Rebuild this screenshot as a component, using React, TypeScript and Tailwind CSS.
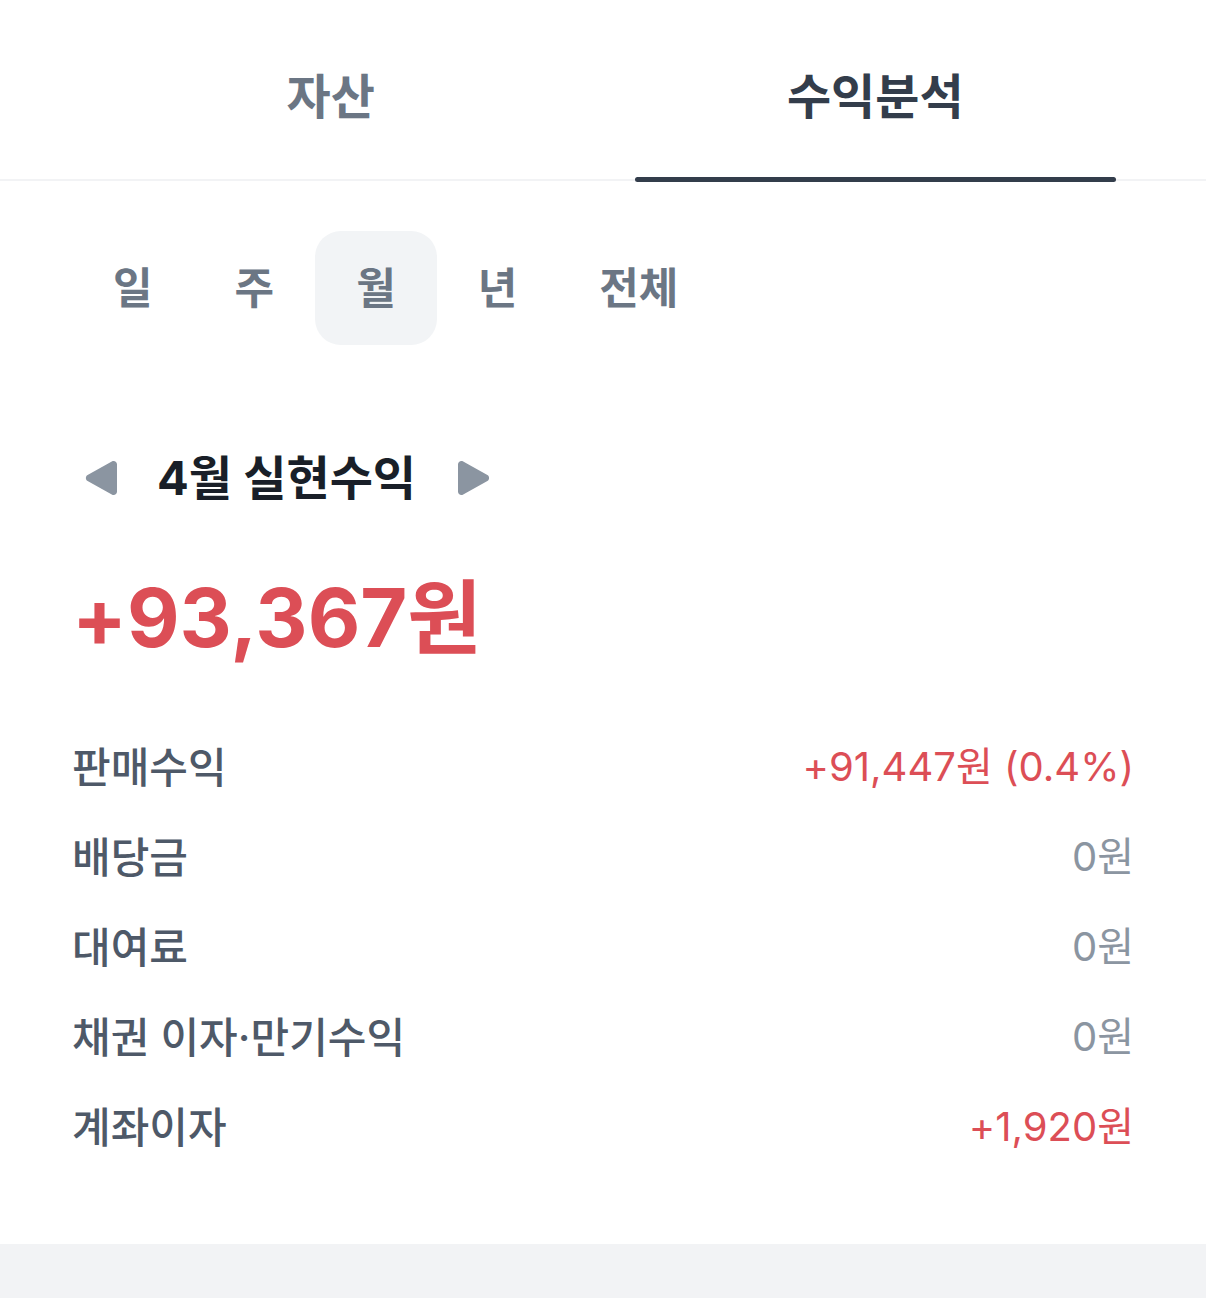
import { useState } from "react";

const FONT = "font-['Inter','Noto_Sans_CJK_KR',sans-serif]";

const rows = [
  { label: "판매수익", value: "+91,447원 (0.4%)", positive: true },
  { label: "배당금", value: "0원", positive: false },
  { label: "대여료", value: "0원", positive: false },
  { label: "채권 이자·만기수익", value: "0원", positive: false },
  { label: "계좌이자", value: "+1,920원", positive: true },
];

const periods = ["일", "주", "월", "년", "전체"];

function Triangle({ dir }: { dir: "left" | "right" }) {
  return (
    <svg width="34" height="36" viewBox="0 0 34 36" className="shrink-0">
      {dir === "left" ? (
        <path
          d="M32 4.5v27c0 2.7-2.9 4.3-5.2 2.9L2.6 21c-2.3-1.3-2.3-4.7 0-6L26.8 1.6C29.1.2 32 1.8 32 4.5z"
          fill="#8b95a1"
        />
      ) : (
        <path
          d="M2 4.5v27c0 2.7 2.9 4.3 5.2 2.9L31.4 21c2.3-1.3 2.3-4.7 0-6L7.2 1.6C4.9.2 2 1.8 2 4.5z"
          fill="#8b95a1"
        />
      )}
    </svg>
  );
}

export default function App() {
  const [tab, setTab] = useState(1);
  const [period, setPeriod] = useState(2);

  return (
    <div className={`w-[1206px] bg-white ${FONT}`}>
      {/* top tabs */}
      <div className="flex gap-[63px] px-[90px]">
        {["자산", "수익분석"].map((t, i) => (
          <button
            key={t}
            onClick={() => setTab(i)}
            className="flex flex-1 flex-col items-center"
          >
            <span
              className={`block pt-[70px] pb-[53px] text-[48px] leading-[54px] font-bold ${
                tab === i ? "text-[#333d4b]" : "text-[#6b7684]"
              }`}
            >
              {t}
            </span>
            <span
              className={`relative z-10 block h-[5px] w-full rounded-full ${
                tab === i ? "bg-[#333d4b]" : "bg-transparent"
              }`}
            />
          </button>
        ))}
      </div>
      <div className="-mt-[3px] h-[2px] bg-[#f2f3f5]" />

      {/* period selector */}
      <div className="mt-[50px] flex px-[72px]">
        {periods.map((p, i) => (
          <button
            key={p}
            onClick={() => setPeriod(i)}
            className={`flex h-[114px] items-center rounded-[26px] px-[41px] text-[43px] font-semibold text-[#6b7684] ${
              period === i ? "bg-[#f2f4f6]" : ""
            }`}
          >
            {p}
          </button>
        ))}
      </div>

      {/* month header */}
      <div className="mt-[103px] flex h-[60px] items-center pl-[85px]">
        <Triangle dir="left" />
        <span className="ml-[38px] mr-[40px] text-[47px] font-bold text-[#191f28]">
          4월 실현수익
        </span>
        <Triangle dir="right" />
      </div>

      <div className="mt-[62px] px-[72px] text-[81px] leading-[96px] font-bold text-[#dc4e56]">
        +93,367원
      </div>

      {/* breakdown */}
      <div className="mt-[56px] flex flex-col px-[72px]">
        {rows.map((r) => (
          <div key={r.label} className="flex h-[90px] items-center justify-between">
            <span className="text-[42px] font-medium text-[#4e5968]">{r.label}</span>
            <span
              className={`text-[40px] ${
                r.positive ? "text-[#dc4e56]" : "text-[#8b95a1]"
              }`}
            >
              {r.value}
            </span>
          </div>
        ))}
      </div>

      <div className="mt-[72px] h-[54px] bg-[#f2f3f5]" />
    </div>
  );
}
